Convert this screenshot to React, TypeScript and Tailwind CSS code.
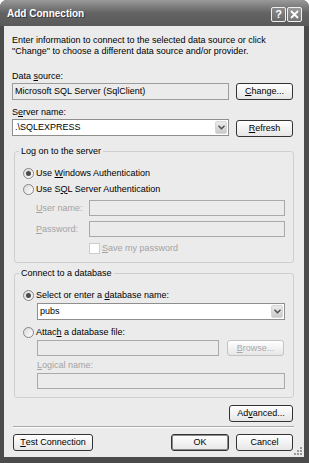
import React from 'react';

const font = "[font-family:'Liberation_Sans',Arial,sans-serif]";

function U({ children }: { children: React.ReactNode }) {
  return <span className="underline underline-offset-[1px]">{children}</span>;
}

function Button({
  children,
  className = '',
  disabled = false,
  primary = false,
}: {
  children: React.ReactNode;
  className?: string;
  disabled?: boolean;
  primary?: boolean;
}) {
  return (
    <div
      className={
        'h-[17px] shrink-0 flex items-center justify-center rounded-[3px] border bg-linear-to-b from-white to-[#e6e6e6] ' +
        (disabled ? 'border-[#c4c4c4] text-[#a8a8a8] ' : 'border-[#333333] text-black ') +
        (primary ? 'shadow-[inset_0_0_0_1px_#8c8c8c] ' : '') +
        className
      }
    >
      {children}
    </div>
  );
}

function Box({ className = '', children, disabled = false }: { className?: string; children?: React.ReactNode; disabled?: boolean }) {
  return (
    <div
      className={
        'flex items-center px-[2px] border ' +
        (disabled ? 'bg-[#ebebeb] border-[#a9a9a9] ' : 'bg-white border-[#8e8e8e] ') +
        className
      }
    >
      {children}
    </div>
  );
}

function Combo({ className = '', value }: { className?: string; value: string }) {
  return (
    <div className={'flex items-center bg-white border border-[#8e8e8e] pl-[2px] pr-[1px] ' + className}>
      <span className="flex-1">{value}</span>
      <div className="w-[12px] h-[13px] rounded-[2px] bg-linear-to-b from-[#ececec] to-[#c9c9c9] border border-[#d6d6d6] flex items-center justify-center">
        <svg width="7" height="5" viewBox="0 0 7 5">
          <path d="M0.5 0.8 L3.5 3.8 L6.5 0.8" stroke="#4a4a4a" strokeWidth="1.4" fill="none" />
        </svg>
      </div>
    </div>
  );
}

function Radio({ checked, children }: { checked?: boolean; children: React.ReactNode }) {
  return (
    <div className="h-[16px] flex items-center">
      <div className="w-[11px] h-[11px] rounded-full border border-[#858585] bg-linear-to-br from-[#d9d9d9] to-white flex items-center justify-center">
        {checked && <div className="w-[5px] h-[5px] rounded-full bg-[#4a4a4a]" />}
      </div>
      <span className="ml-[2px]">{children}</span>
    </div>
  );
}

function Group({ title, className = '', children }: { title: string; className?: string; children: React.ReactNode }) {
  return (
    <fieldset className={'ml-[2px] w-[280px] border border-[#cfcfcf] rounded-[3px] px-[8px] pt-[8px] pb-[8px] ' + className}>
      <legend className="ml-[-4px] px-[2px] leading-[11px]">{title}</legend>
      {children}
    </fieldset>
  );
}

export default function App() {
  return (
    <div className="w-[309px] h-[463px] bg-white">
      <div className="w-[309px] h-[463px] flex flex-col rounded-t-[7px] overflow-hidden bg-[#4b4b4b]">
        {/* title bar */}
        <div className="h-[26px] shrink-0 flex items-center pl-[7px] pr-[7px] bg-linear-to-b from-[#9a9a9a] via-[#636363] to-[#5a5a5a]">
          <span className={font + ' font-bold text-[10px] text-white [text-shadow:1px_1px_0_#3a3a3a]'}>
            Add Connection
          </span>
          <div className="ml-auto mt-[3px] flex gap-[1px]">
            <div className="w-[15px] h-[15px] rounded-[2px] border border-[#f0f0f0] bg-linear-to-b from-[#8a8a8a] to-[#6a6a6a] flex items-center justify-center">
              <span className={font + ' font-bold text-[11px] leading-[11px] text-white'}>?</span>
            </div>
            <div className="w-[15px] h-[15px] rounded-[2px] border border-[#f0f0f0] bg-linear-to-b from-[#9a9a9a] to-[#767676] flex items-center justify-center">
              <svg width="9" height="9" viewBox="0 0 9 9">
                <path d="M1 1 L8 8 M8 1 L1 8" stroke="white" strokeWidth="1.8" />
              </svg>
            </div>
          </div>
        </div>

        {/* body */}
        <div className={'relative flex-1 ml-[4px] mr-[5px] mb-[6px] bg-[#ebebeb] flex flex-col pl-[8px] pr-[11px] pt-[9px] text-[9px] leading-[11px] text-black ' + font}>
          <p>
            Enter information to connect to the selected data source or click
            <br />
            "Change" to choose a different data source and/or provider.
          </p>

          <div className="mt-[14px]">
            Data <U>s</U>ource:
          </div>
          <div className="mt-[1px] flex gap-[7px]">
            <Box disabled className="h-[17px] w-[217px] !border-[#9c9c9c]">
              Microsoft SQL Server (SqlClient)
            </Box>
            <Button className="w-[57px]">
              <U>C</U>hange...
            </Button>
          </div>

          <div className="mt-[7px]">
            S<U>e</U>rver name:
          </div>
          <div className="flex gap-[7px] items-center">
            <Combo className="h-[17px] w-[217px]" value=".\SQLEXPRESS" />
            <Button className="w-[57px] mt-[2px]">
              <U>R</U>efresh
            </Button>
          </div>

          <Group title="Log on to the server" className="mt-[9px]">
            <Radio checked>
              Use <U>W</U>indows Authentication
            </Radio>
            <Radio>
              Use S<U>Q</U>L Server Authentication
            </Radio>
            <div className="mt-[3px] flex items-center">
              <span className="w-[66px] pl-[13px] text-[#a3a3a3]">
                <U>U</U>ser name:
              </span>
              <Box disabled className="h-[16px] w-[196px]" />
            </div>
            <div className="mt-[5px] flex items-center">
              <span className="w-[66px] pl-[13px] text-[#a3a3a3]">
                <U>P</U>assword:
              </span>
              <Box disabled className="h-[16px] w-[196px]" />
            </div>
            <div className="mt-[5px] h-[12px] flex items-center pl-[66px]">
              <div className="w-[11px] h-[11px] border border-[#cdcdcd] bg-white" />
              <span className="ml-[2px] text-[#a3a3a3]">
                <U>S</U>ave my password
              </span>
            </div>
          </Group>

          <Group title="Connect to a database" className="mt-[5px]">
            <Radio checked>
              Select or enter a <U>d</U>atabase name:
            </Radio>
            <Combo className="ml-[14px] h-[17px] w-[248px]" value="pubs" />
            <div className="mt-[4px]">
              <Radio>
                Attac<U>h</U> a database file:
              </Radio>
            </div>
            <div className="ml-[14px] flex gap-[8px]">
              <Box disabled className="h-[16px] w-[182px]" />
              <Button disabled className="w-[57px] !h-[16px]">
                <U>B</U>rowse...
              </Button>
            </div>
            <div className="mt-[4px] ml-[14px] text-[#a3a3a3]">
              <U>L</U>ogical name:
            </div>
            <Box disabled className="mt-[2px] ml-[14px] h-[16px] w-[248px]" />
          </Group>

          <div className="mt-[7px] flex justify-end">
            <Button className="w-[64px]">
              Ad<U>v</U>anced...
            </Button>
          </div>

          <div className="mt-[4px] ml-[1px] mr-[-1px] h-[2px] border-t border-[#a8a8a8] border-b border-b-white" />

          <div className="mt-[6px] flex ml-[1px]">
            <Button className="w-[80px]">
              <U>T</U>est Connection
            </Button>
            <Button primary className="w-[58px] ml-auto">
              OK
            </Button>
            <Button className="w-[57px] ml-[7px]">Cancel</Button>
          </div>

          {/* resize grip */}
          <svg className="absolute right-[1px] bottom-[1px]" width="9" height="9" viewBox="0 0 9 9">
            <rect x="6" y="0" width="2" height="2" fill="#9a9a9a" />
            <rect x="3" y="3" width="2" height="2" fill="#9a9a9a" />
            <rect x="6" y="3" width="2" height="2" fill="#9a9a9a" />
            <rect x="0" y="6" width="2" height="2" fill="#9a9a9a" />
            <rect x="3" y="6" width="2" height="2" fill="#9a9a9a" />
            <rect x="6" y="6" width="2" height="2" fill="#9a9a9a" />
          </svg>
        </div>
      </div>
    </div>
  );
}
